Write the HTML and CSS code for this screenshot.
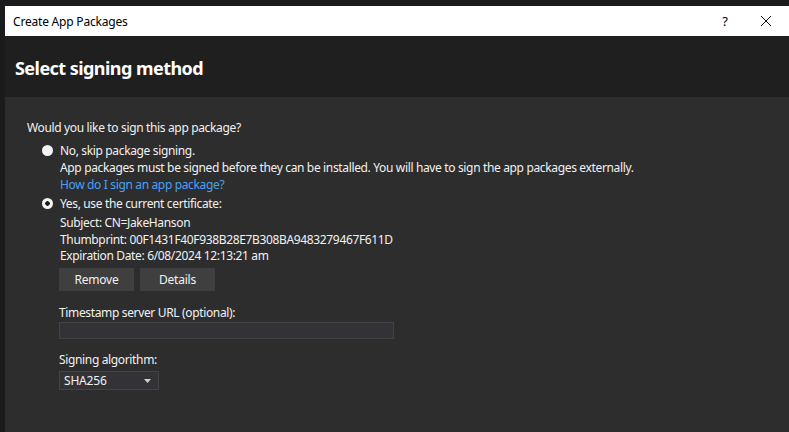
FILE: index.html
```html
<!DOCTYPE html>
<html>
<head>
<meta charset="utf-8">
<link rel="stylesheet" href="styles.css">
</head>
<body>
<div class="desk">
  <div class="window">
    <div class="titlebar">
      <span class="title">Create App Packages</span>
      <span class="tb-help">?</span>
      <span class="tb-close"><svg width="12" height="12" viewBox="0 0 12 12"><path d="M1 1L11 11M11 1L1 11" stroke="#111" stroke-width="1"/></svg></span>
    </div>
    <div class="header"><h1>Select signing method</h1></div>
    <div class="content">
      <p class="question">Would you like to sign this app package?</p>
      <div class="option">
        <span class="radio"></span>
        <div class="opt-body">
          <div class="line">No, skip package signing.</div>
          <div class="line">App packages must be signed before they can be installed. You will have to sign the app packages externally.</div>
          <div class="line link">How do I sign an app package?</div>
        </div>
      </div>
      <div class="option opt2">
        <span class="radio checked"></span>
        <div class="opt-body">
          <div class="line">Yes, use the current certificate:</div>
          <div class="cert">
            <div class="line">Subject: CN=JakeHanson</div>
            <div class="line">Thumbprint: 00F1431F40F938B28E7B308BA9483279467F611D</div>
            <div class="line">Expiration Date: 6/08/2024 12:13:21 am</div>
          </div>
        </div>
      </div>
      <div class="sub">
        <div class="buttons">
          <span class="btn">Remove</span>
          <span class="btn">Details</span>
        </div>
        <div class="label">Timestamp server URL (optional):</div>
        <div class="input"></div>
        <div class="label label2">Signing algorithm:</div>
        <div class="select"><span>SHA256</span><svg width="7" height="4" viewBox="0 0 7 4"><path d="M0 0H7L3.5 4Z" fill="#d0d0d0"/></svg></div>
      </div>
    </div>
  </div>
</div>
</body>
</html>
```
FILE: styles.css
```css
html, body { margin: 0; padding: 0; }
body {
  width: 789px; height: 432px; overflow: hidden;
  background: #1b1b1d;
  font-family: "Noto Sans", "Open Sans", sans-serif;
  font-size: 12px;
}
.desk { padding: 6px 0 0 5px; height: 426px; }
.window { display: flex; flex-direction: column; height: 100%; }
.titlebar {
  height: 30px; background: #ffffff; display: flex; align-items: center;
  color: #000;
}
.title { margin-left: 8px; flex: 1; font-size: 12px; letter-spacing: -0.2px; }
.tb-help { width: 20px; font-size: 13px; margin-right: 25px; text-align: center; }
.tb-close { width: 12px; height: 12px; margin-right: 17px; display: flex; }
.header { height: 61px; background: #1f1f1f; display: flex; align-items: center; }
.header h1 {
  margin: 0 0 0 10px; color: #fff; font-size: 18px; font-weight: 700;
  letter-spacing: -0.55px; position: relative; top: 1px;
}
.content { flex: 1; background: #2d2d2d; color: #f1f1f1; padding: 22px 0 0 22px; }
.line, .question, .label { letter-spacing: -0.35px; line-height: 17px; white-space: nowrap; }
.question { margin: 0 0 6px 0; }
.option { display: flex; margin-left: 15px; }
.opt2 { margin-top: 2px; }
.radio {
  width: 11px; height: 11px; border-radius: 50%; background: #f4f4f4;
  margin-top: 3px; margin-right: 7px; flex: none; box-sizing: border-box;
}
.radio.checked { background: radial-gradient(circle, #1b1b1b 0 2px, #f4f4f4 2.5px); }
.link { color: #4aa1f2; }
.cert { margin-top: 2px; }
.cert .line:last-child { margin-top: -1px; }
.sub { margin-left: 32px; }
.buttons { display: flex; gap: 6px; margin-top: 4px; }
.btn {
  width: 75px; height: 23px; background: #3f3f3f; display: flex;
  align-items: center; justify-content: center; letter-spacing: -0.2px;
}
.label { margin-top: 13px; }
.input {
  width: 333px; height: 15px; margin-top: 1px; background: #333337;
  border: 1px solid #434346;
}
.label2 { margin-top: 12px; }
.select {
  height: 17px; margin-top: 3px; background: #333337;
  border: 1px solid #434346; display: flex; align-items: center;
  justify-content: space-between; padding: 0 7px 0 4px;
  width: 87px; letter-spacing: -0.2px;
}
```
